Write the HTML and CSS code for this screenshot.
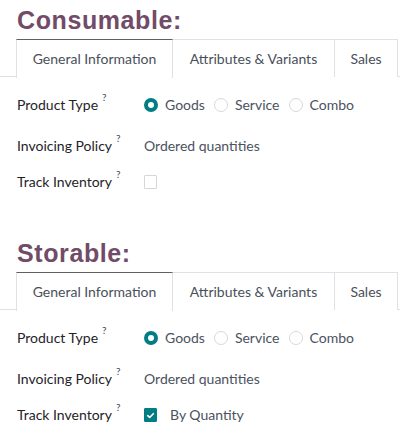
FILE: index.html
```html
<!DOCTYPE html>
<html>
<head>
<meta charset="utf-8">
<link rel="stylesheet" href="styles.css">
</head>
<body>
<section class="block">
  <h1 class="title">Consumable:</h1>
  <div class="tabs">
    <div class="tab tab-active tab-general">General Information</div>
    <div class="tab tab-attrs">Attributes &amp; Variants</div>
    <div class="tab tab-sales">Sales</div>
  </div>
  <div class="form">
    <div class="row row-tall">
      <div class="label">Product Type<sup class="help">?</sup></div>
      <div class="value radios">
        <span class="radio radio-on"></span><span class="opt">Goods</span>
        <span class="radio"></span><span class="opt">Service</span>
        <span class="radio"></span><span class="opt">Combo</span>
      </div>
    </div>
    <div class="row">
      <div class="label">Invoicing Policy<sup class="help">?</sup></div>
      <div class="value">Ordered quantities</div>
    </div>
    <div class="row row-last">
      <div class="label">Track Inventory<sup class="help">?</sup></div>
      <div class="value"><span class="check"></span></div>
    </div>
  </div>
</section>
<section class="block">
  <h1 class="title">Storable:</h1>
  <div class="tabs">
    <div class="tab tab-active tab-general">General Information</div>
    <div class="tab tab-attrs">Attributes &amp; Variants</div>
    <div class="tab tab-sales">Sales</div>
  </div>
  <div class="form">
    <div class="row row-tall">
      <div class="label">Product Type<sup class="help">?</sup></div>
      <div class="value radios">
        <span class="radio radio-on"></span><span class="opt">Goods</span>
        <span class="radio"></span><span class="opt">Service</span>
        <span class="radio"></span><span class="opt">Combo</span>
      </div>
    </div>
    <div class="row">
      <div class="label">Invoicing Policy<sup class="help">?</sup></div>
      <div class="value">Ordered quantities</div>
    </div>
    <div class="row row-last">
      <div class="label">Track Inventory<sup class="help">?</sup></div>
      <div class="value"><span class="check check-on"><svg viewBox="0 0 13 13" width="13" height="13"><path d="M3.2 6.6 L5.5 8.8 L9.8 4.4" fill="none" stroke="#fff" stroke-width="1.9" stroke-linecap="round" stroke-linejoin="round"/></svg></span><span class="opt-check">By Quantity</span></div>
    </div>
  </div>
</section>
</body>
</html>
```
FILE: styles.css
```css
* { box-sizing: border-box; }
html, body { margin: 0; padding: 0; background: #fff; }
body {
  width: 400px;
  height: 438px;
  overflow: hidden;
  font-family: Lato, "Noto Sans", sans-serif;
  font-size: 14px;
  color: #212529;
}
.block { padding-top: 5px; }
.block + .block { margin-top: 41px; }
.title {
  margin: 0 0 4px 17px;
  font-family: "Liberation Sans", Arial, sans-serif;
  font-weight: bold;
  font-size: 25px;
  letter-spacing: 0.6px;
  line-height: 30px;
  color: #714b67;
}
.tabs {
  display: flex;
  border-bottom: 1px solid #dee2e6;
  height: 38px;
}
.tab {
  height: 38px;
  line-height: 37px;
  text-align: center;
  color: #4a505a;
  border: 1px solid #dee2e6;
  border-bottom: none;
  background: #fff;
}
.tab + .tab { border-left: none; }
.tab-general { margin-left: 16px; width: 157px; }
.tab-attrs { width: 162px; }
.tab-sales { width: 63px; }
.tab-active {
  border-top: 1px solid #5c6067;
  height: 39px;
  margin-bottom: -1px;
}
.form { padding-top: 18px; }
.row {
  display: flex;
  align-items: flex-start;
  height: 36px;
  line-height: 20px;
}
.row-tall { height: 41px; }
.row-last { height: 20px; }
.label {
  width: 144px;
  padding-left: 17px;
  color: #1f2328;
}
.help {
  font-size: 10px;
  line-height: 0;
  margin-left: 4px;
  color: #3b4a5a;
  position: relative;
  top: -3px;
}
.value {
  display: flex;
  align-items: center;
  height: 20px;
  color: #4b5260;
}
.radio {
  width: 14px;
  height: 14px;
  border-radius: 50%;
  border: 1px solid #d6d9dd;
  margin-right: 7px;
  flex: none;
}
.radio-on { border: 4px solid #017e84; }
.opt { margin-right: 9px; }
.check {
  width: 13px;
  height: 14px;
  border: 1px solid #d3d6da;
  border-radius: 1px;
  display: flex;
  align-items: center;
  justify-content: center;
  flex: none;
}
.check-on {
  background: #017e84;
  border-color: #017e84;
}
.check svg { display: block; }
.opt-check { margin-left: 13px; }
```
